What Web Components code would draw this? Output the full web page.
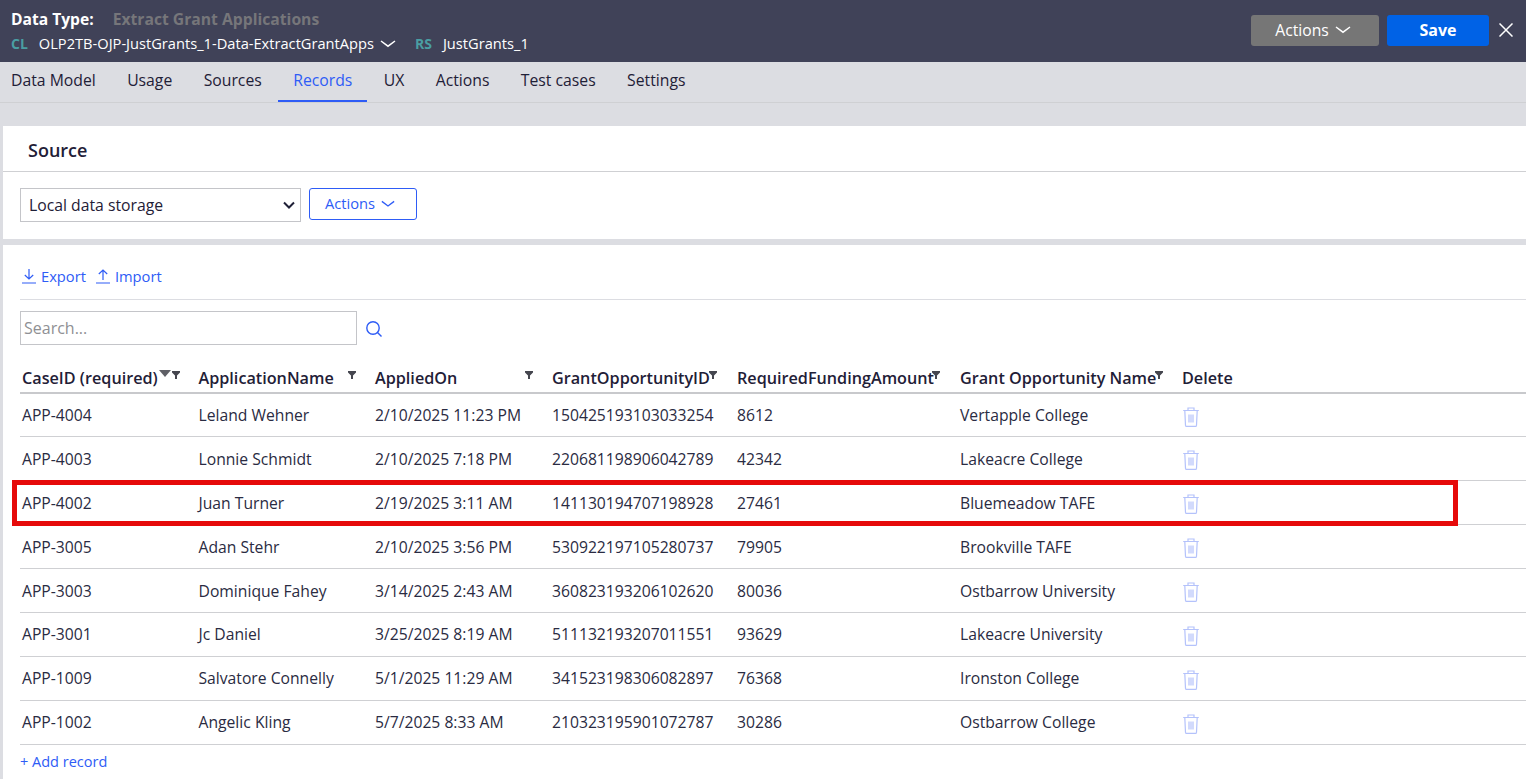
<!DOCTYPE html>
<html lang="en">
<head>
<meta charset="utf-8">
<title>Data Type: Extract Grant Applications</title>
<style>
  html, body { margin: 0; height: 100%; overflow: hidden; }
  body { background: #dcdde2; font-family: 'Open Sans', 'Noto Sans', sans-serif; font-size: 16px; color: #1f2037; }
</style>
</head>
<body>
<app-header></app-header>
<tab-bar></tab-bar>
<source-panel></source-panel>
<records-panel></records-panel>

<script>
const CHEVRON = `<svg width="16" height="8" viewBox="0 0 16 8" fill="none" stroke="currentColor" stroke-width="1.5"><path d="M1 1l7 5.2L15 1"/></svg>`;

class AppHeader extends HTMLElement {
    constructor() {
        super();
        this.attachShadow({mode: 'open'});
    }

    connectedCallback() {
        this.shadowRoot.innerHTML = `
      <style>
        :host {
          display: flex;
          justify-content: space-between;
          align-items: center;
          height: 62px;
          background: #404258;
          color: #fff;
          padding: 0 11px;
          box-sizing: border-box;
        }
        .line1 { display: flex; height: 19px; align-items: center; font-weight: 700; font-size: 15.6px; }
        .line1 .name { margin-left: 19px; color: #76767a; font-size: 15.7px; }
        .line2 { display: flex; align-items: center; height: 20px; margin-top: 5px; font-size: 14.65px; }
        .tag { color: #4a9ea3; font-weight: 700; font-size: 14px; }
        .cl { margin-right: 11px; }
        .rs { margin: 0 11px 0 19px; }
        .line2 svg { margin: 1px 0 0 6px; }
        .right { display: flex; align-items: center; margin: -2px 2px 0 0; }
        button {
          font: inherit; border: 0; border-radius: 3px; height: 31px; color: #fff;
          display: flex; align-items: center; justify-content: center; padding: 0;
        }
        .actions { width: 128px; background: #767676; gap: 6px; margin-right: 8px; font-size: 15.7px; padding-right: 4px; }
        .save { width: 102px; background: #0062e6; font-weight: 700; margin-right: 10px; }
        .close { display: block; }
      </style>
      <div>
        <div class="line1"><span>Data Type:</span><span class="name">Extract Grant Applications</span></div>
        <div class="line2">
          <span class="tag cl">CL</span><span>OLP2TB-OJP-JustGrants_1-Data-ExtractGrantApps</span>${CHEVRON}
          <span class="tag rs">RS</span><span>JustGrants_1</span>
        </div>
      </div>
      <div class="right">
        <button class="actions">Actions ${CHEVRON}</button>
        <button class="save">Save</button>
        <svg class="close" width="14" height="14" viewBox="0 0 14 14" stroke="#fff" stroke-width="1.5"><path d="M.5.5l13 13M13.500.5l-13 13"/></svg>
      </div>
    `;
    }
}

class TabBar extends HTMLElement {
    constructor() {
        super();
        this.attachShadow({mode: 'open'});
    }

    connectedCallback() {
        const tabs = ['Data Model', 'Usage', 'Sources', 'Records', 'UX', 'Actions', 'Test cases', 'Settings'];
        this.shadowRoot.innerHTML = `
      <style>
        :host {
          display: flex;
          height: 41px;
          padding-left: 11px;
          gap: 31.4px;
          border-bottom: 1px solid #cfd0d3;
          box-sizing: border-box;
          font-size: 15.75px;
          margin-bottom: 23px;
        }
        a { display: block; line-height: 36px; position: relative; color: #1f2037; }
        a.active { color: #2e5cf6; }
        a.active::after {
          content: ''; position: absolute; left: -15px; right: -15px; bottom: 0; height: 2px; background: #2e5cf6;
        }
      </style>
      ${tabs.map(t => `<a class="${t === 'Records' ? 'active' : ''}">${t}</a>`).join('')}
    `;
    }
}

class SourcePanel extends HTMLElement {
    constructor() {
        super();
        this.attachShadow({mode: 'open'});
    }

    connectedCallback() {
        this.shadowRoot.innerHTML = `
      <style>
        :host { display: block; margin: 0 0 6px 3px; background: #fff; height: 113px; }
        h2 {
          margin: 0; height: 46px; box-sizing: border-box; padding: 12px 0 0 25px;
          font-size: 18px; line-height: 24px; font-weight: 600; border-bottom: 1px solid #cfd0d3;
          color: #1f2037;
        }
        .row { display: flex; padding: 16px 0 0 17px; gap: 8px; align-items: flex-start; }
        .select {
          width: 281px; height: 34px; box-sizing: border-box; border: 1px solid #c4c5c9;
          display: flex; align-items: center; justify-content: space-between; padding: 0 5px 0 8px;
          font-size: 15.75px;
        }
        .btn {
          width: 108px; height: 32px; box-sizing: border-box; border: 1px solid #2e5cf6; border-radius: 3px;
          color: #2e5cf6; display: flex; align-items: center; gap: 6px;
          font-size: 14.7px; padding-left: 15px;
        }
        .btn span { margin-top: -2px; }
      </style>
      <h2>Source</h2>
      <div class="row">
        <div class="select">
          <span>Local data storage</span>
          <svg width="12" height="8" viewBox="0 0 12 8" fill="none" stroke="#1f2037" stroke-width="2"><path d="M1 1.5l5 5 5-5"/></svg>
        </div>
        <div class="btn"><span>Actions</span>${CHEVRON.replace('width="16"', 'width="14"')}</div>
      </div>
    `;
    }
}

class RecordsPanel extends HTMLElement {
    constructor() {
        super();
        this.attachShadow({mode: 'open'});
    }

    connectedCallback() {
        this.shadowRoot.innerHTML = `
      <style>
        :host { display: block; margin-left: 3px; background: #fff; height: 534px; padding-left: 17px; color: #1f2037; position: relative; }
        .links { display: flex; height: 55px; box-sizing: border-box; padding-top: 21px; gap: 8px; font-size: 14.7px; color: #2e5cf6; border-bottom: 1px solid #dcdde2; }
        .links a { display: flex; align-items: flex-start; gap: 4px; line-height: 21px; padding-left: 1px; }
        .links svg { margin-top: 2px; }
        .search { display: flex; align-items: center; margin-top: 10px; height: 36px; }
        .box {
          width: 337px; height: 34px; box-sizing: border-box; border: 1px solid #c4c5c9;
          padding-left: 3px; line-height: 32px; color: #8f9094; font-size: 16px;
        }
        .search svg { margin: 2px 0 0 8px; }
        .add { color: #2e5cf6; font-size: 14.5px; line-height: 20px; margin-top: 7px; }
        .mark {
          position: absolute; left: 9px; top: 235px; width: 1446px; height: 46px;
          box-sizing: border-box; border: 5px solid #e60a0a; pointer-events: none;
        }
      </style>
      <div class="links">
        <a><svg width="16" height="16" viewBox="0 0 16 16" fill="none" stroke="#2e5cf6" stroke-width="1.2"><path d="M8 1v10M3.800 7L8 11l4.200-4M1 15h14"/></svg>Export</a>
        <a><svg width="16" height="16" viewBox="0 0 16 16" fill="none" stroke="#2e5cf6" stroke-width="1.2"><path d="M8 12V2M3.800 6L8 2l4.200 4M1 15h14"/></svg>Import</a>
      </div>
      <div class="search">
        <div class="box">Search...</div>
        <svg width="18" height="18" viewBox="0 0 18 18" fill="none" stroke="#2e5cf6" stroke-width="1.4"><circle cx="8" cy="8" r="6.200"/><path d="M12.500 12.500l4 4"/></svg>
      </div>
      <records-table></records-table>
      <div class="add">+ Add record</div>
      <div class="mark"></div>
    `;
    }
}

class RecordsTable extends HTMLElement {
    constructor() {
        super();
        this.attachShadow({mode: 'open'});
    }

    connectedCallback() {
        const rows = [
            ['APP-4004', 'Leland Wehner', '2/10/2025 11:23 PM', '150425193103033254', '8612', 'Vertapple College'],
            ['APP-4003', 'Lonnie Schmidt', '2/10/2025 7:18 PM', '220681198906042789', '42342', 'Lakeacre College'],
            ['APP-4002', 'Juan Turner', '2/19/2025 3:11 AM', '141130194707198928', '27461', 'Bluemeadow TAFE'],
            ['APP-3005', 'Adan Stehr', '2/10/2025 3:56 PM', '530922197105280737', '79905', 'Brookville TAFE'],
            ['APP-3003', 'Dominique Fahey', '3/14/2025 2:43 AM', '360823193206102620', '80036', 'Ostbarrow University'],
            ['APP-3001', 'Jc Daniel', '3/25/2025 8:19 AM', '511132193207011551', '93629', 'Lakeacre University'],
            ['APP-1009', 'Salvatore Connelly', '5/1/2025 11:29 AM', '341523198306082897', '76368', 'Ironston College'],
            ['APP-1002', 'Angelic Kling', '5/7/2025 8:33 AM', '210323195901072787', '30286', 'Ostbarrow College'],
        ];
        const funnel = `<svg class="f" width="8" height="8" viewBox="0 0 8 8" fill="#45464f"><path d="M0 0h8v1.600L5 4.400V8H3V4.400L0 1.600z"/></svg>`;
        const heads = [
            ['CaseID (required)', 150, true],
            ['ApplicationName', 151, false],
            ['AppliedOn', 152, false],
            ['GrantOpportunityID', 159, false],
            ['RequiredFundingAmount', 197, false],
            ['Grant Opportunity Name', 197, false],
        ];
        const trash = `<svg width="16" height="20" viewBox="0 0 16 20" fill="none" stroke="#b4c2fb" stroke-width="1.200"><path d="M.2 3.500h15.600M5 3.300V1h6v2.300M1.800 3.500l.7 14.900q.1 1 1 1h9q.9 0 1-1l.7-14.900M6 7.500v8M8 7.500v8M10 7.500v8"/></svg>`;
        this.shadowRoot.innerHTML = `
      <style>
        :host { display: block; margin-top: 11px; width: 1506px; }
        table { border-collapse: collapse; table-layout: fixed; width: 100%; font-size: 15.7px; }
        th {
          height: 36px; padding: 7px 0 0 2px; text-align: left; font-weight: 600; font-size: 16.2px;
          border-bottom: 2px solid #c8c9cc; position: relative; white-space: nowrap; box-sizing: border-box;
        }
        td { height: 44px; padding: 0 0 0 2px; border-bottom: 1px solid #cfd0d3; box-sizing: border-box; color: #2a2b42; }
        tr:first-child td { height: 43px; }
        tr:nth-child(n+2):nth-child(-n+5) td:not(:last-child) { padding-top: 2px; }
        td svg { display: block; margin: 4px 0 0 1px; }
        .f { position: absolute; top: 14px; }
        .s { position: absolute; top: 13px; left: 139px; width: 0; height: 0; border: 6px solid transparent; border-top: 7px solid #5f6066; border-bottom: 0; }
      </style>
      <table>
        <colgroup>
          <col style="width:176.5px"><col style="width:176.5px"><col style="width:177px">
          <col style="width:185px"><col style="width:223px"><col style="width:222px"><col>
        </colgroup>
        <thead>
          <tr>
            ${heads.map(([h, x, sorted]) => `<th>${h}${sorted ? '<span class="s"></span>' : ''}${funnel.replace('class="f"', `class="f" style="left:${x + (sorted ? 2 : 0)}px"`)}</th>`).join('')}
            <th>Delete</th>
          </tr>
        </thead>
        <tbody>
          ${rows.map(r => `<tr>${r.map(c => `<td>${c}</td>`).join('')}<td>${trash}</td></tr>`).join('')}
        </tbody>
      </table>
    `;
    }
}

customElements.define('app-header', AppHeader);
customElements.define('tab-bar', TabBar);
customElements.define('source-panel', SourcePanel);
customElements.define('records-panel', RecordsPanel);
customElements.define('records-table', RecordsTable);
</script>
</body>
</html>
